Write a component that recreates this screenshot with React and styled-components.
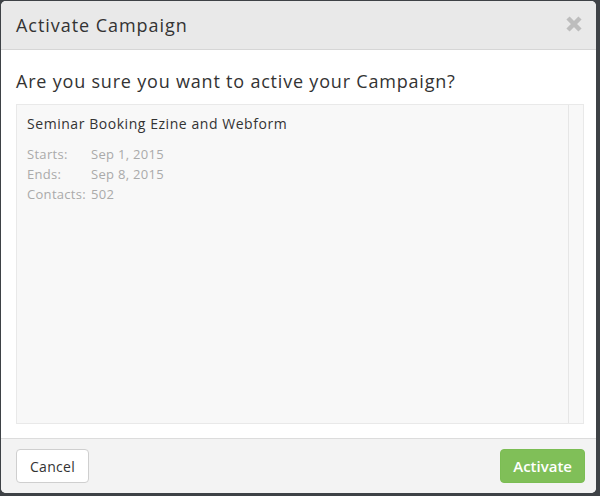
import React from "react";
import styled, { createGlobalStyle } from "styled-components";

const Global = createGlobalStyle`
  html, body { margin: 0; padding: 0; background: #3e4246; }
  body { font-family: "Open Sans", "Liberation Sans", sans-serif; }
  * { box-sizing: border-box; }
`;

const Page = styled.div`
  width: 600px;
  height: 496px;
  padding: 1px 4px 3px 1px;
`;

const Modal = styled.div`
  width: 595px;
  height: 492px;
  background: #fff;
  border-radius: 5px;
  overflow: hidden;
  display: flex;
  flex-direction: column;
`;

const Header = styled.div`
  height: 49px;
  flex: none;
  background: #e9e9e9;
  border-bottom: 1px solid #d6d6d6;
  display: flex;
  align-items: center;
  justify-content: space-between;
  padding: 0 12px 0 15px;
`;

const Title = styled.h1`
  margin: 0;
  font-size: 18px;
  font-weight: 400;
  color: #333;
  letter-spacing: 0.95px;
`;

const Close = styled.button`
  border: 0;
  background: none;
  padding: 0;
  width: 20px;
  height: 20px;
  display: flex;
  align-items: center;
  justify-content: center;
  margin-bottom: 3px;
  cursor: pointer;
`;

const Body = styled.div`
  flex: 1;
  display: flex;
  flex-direction: column;
  padding: 19px 12px 14px 15px;
`;

const Question = styled.p`
  margin: 0 0 11px;
  font-size: 18px;
  color: #333;
  letter-spacing: 0.8px;
  line-height: 24px;
`;

const Box = styled.div`
  flex: 1;
  background: #f8f8f8;
  border: 1px solid #e9e9e9;
  display: flex;
`;

const BoxContent = styled.div`
  flex: 1;
  padding: 9px 10px;
`;

const Track = styled.div`
  width: 15px;
  flex: none;
  border-left: 1px solid #e6e6e6;
  background: #f8f8f8;
`;

const Name = styled.div`
  font-size: 14px;
  color: #333;
  line-height: 20px;
  margin-bottom: 10px;
  letter-spacing: 0.55px;
`;

const Meta = styled.div`
  display: grid;
  grid-template-columns: 64px auto;
  font-size: 13px;
  line-height: 20px;
  color: #aaa;
  letter-spacing: 0.3px;
`;

const Footer = styled.div`
  height: 55px;
  flex: none;
  background: #f3f3f3;
  border-top: 1px solid #dcdcdc;
  display: flex;
  align-items: center;
  justify-content: space-between;
  padding: 0 11px 0 15px;
`;

const Button = styled.button`
  height: 34px;
  border-radius: 4px;
  font-family: "Open Sans", "Liberation Sans", sans-serif;
  font-size: ${p => (p.$primary ? "15px" : "14px")};
  padding: 0 ${p => (p.$primary ? "12px" : "13px")};
  border: 1px solid ${p => (p.$primary ? "#7bbd53" : "#cfcfcf")};
  background: ${p => (p.$primary ? "#80bf58" : "#fff")};
  color: ${p => (p.$primary ? "#fff" : "#333")};
  font-weight: ${p => (p.$primary ? 600 : 400)};
  letter-spacing: ${p => (p.$primary ? "0" : "0.3px")};
  cursor: pointer;
`;

export default function App() {
  return (
    <>
      <Global />
      <Page>
        <Modal>
          <Header>
            <Title>Activate Campaign</Title>
            <Close aria-label="Close">
              <svg width="18" height="18" viewBox="0 0 18 18">
                <path d="M3 3 L15 15 M15 3 L3 15" stroke="#bdbdbd" strokeWidth="4.5" strokeLinecap="butt" />
              </svg>
            </Close>
          </Header>
          <Body>
            <Question>Are you sure you want to active your Campaign?</Question>
            <Box>
              <BoxContent>
                <Name>Seminar Booking Ezine and Webform</Name>
                <Meta>
                  <span>Starts:</span><span>Sep 1, 2015</span>
                  <span>Ends:</span><span>Sep 8, 2015</span>
                  <span>Contacts:</span><span>502</span>
                </Meta>
              </BoxContent>
              <Track />
            </Box>
          </Body>
          <Footer>
            <Button>Cancel</Button>
            <Button $primary>Activate</Button>
          </Footer>
        </Modal>
      </Page>
    </>
  );
}
